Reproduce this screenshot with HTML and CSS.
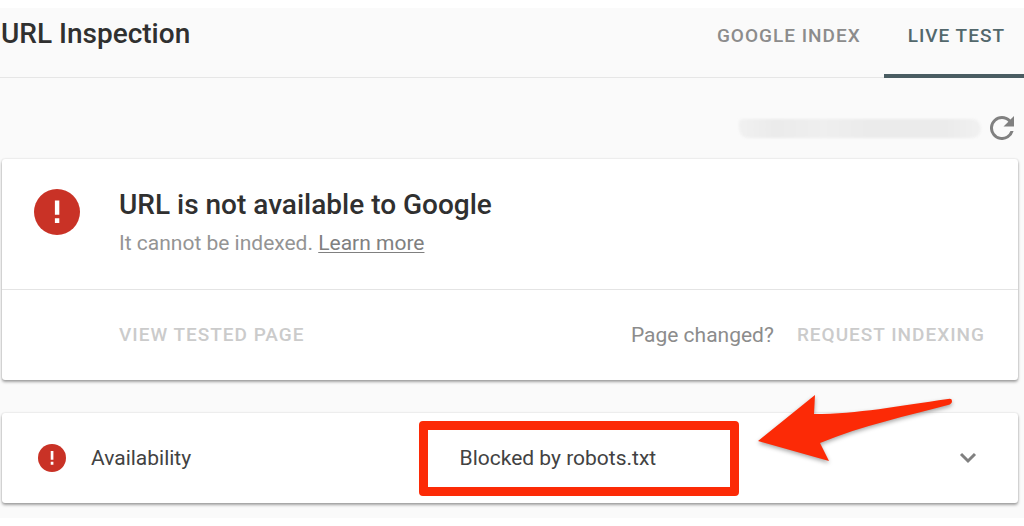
FILE: index.html
```
<!DOCTYPE html>
<html lang="en">
<head>
    <meta charset="UTF-8">
    <meta name="viewport" content="width=device-width, initial-scale=1.0">
    <title>URL Inspection</title>
    <link rel="stylesheet" href="styles.css">
</head>
<body>

    <main class="page">
        <header class="header">
            <h1>URL Inspection</h1>
            <nav class="tabs">
                <button class="tab" type="button">GOOGLE INDEX</button>
                <button class="tab active" type="button">LIVE TEST</button>
            </nav>
        </header>

        <div class="toolbar">
            <span class="redacted"></span>
            <button class="icon-button" type="button" aria-label="Refresh">
                <svg class="refresh" viewBox="4 4 16 16">
                    <path d="M17.65 6.35A7.96 7.96 0 0 0 12 4a8 8 0 1 0 7.73 10h-2.08A6 6 0 1 1 12 6c1.66 0 3.14.69 4.22 1.78L13 11h7V4z"/>
                </svg>
            </button>
        </div>

        <!-- Verdict -->
        <section class="card">
            <div class="verdict">
                <svg class="error-icon large" viewBox="0 0 24 24">
                    <circle cx="12" cy="12" r="12"/>
                    <path d="M10.9 6h2.3v7.4h-2.3zM10.9 15.2h2.3v2.5h-2.3z"/>
                </svg>
                <div>
                    <h2>URL is not available to Google</h2>
                    <p>It cannot be indexed. <a href="#">Learn more</a></p>
                </div>
            </div>
            <div class="actions">
                <button class="text-button" type="button" disabled>VIEW TESTED PAGE</button>
                <span class="hint">Page changed?</span>
                <button class="text-button" type="button" disabled>REQUEST INDEXING</button>
            </div>
        </section>

        <!-- Availability -->
        <section class="card row">
            <div class="row-name">
                <svg class="error-icon" viewBox="0 0 24 24">
                    <circle cx="12" cy="12" r="12"/>
                    <path d="M10.9 6h2.3v7.4h-2.3zM10.9 15.2h2.3v2.5h-2.3z"/>
                </svg>
                <span>Availability</span>
            </div>
            <div class="highlight">
                <span>Blocked by robots.txt</span>
                <svg class="arrow" viewBox="0 0 194 70">
                    <path d="M0 47 57 1 56 20C100 20 140 12 190 5Q194 4 194 7Q194 10 190 11C150 22 105 31 62 49L71 67Z"/>
                </svg>
            </div>
            <button class="icon-button" type="button" aria-label="Expand">
                <svg class="chevron" viewBox="0 0 18 12">
                    <path d="M2 2l7 7 7-7"/>
                </svg>
            </button>
        </section>
    </main>

</body>
</html>
```

FILE: styles.css
```
body {
    margin: 0;
    padding: 8px 0;
    font-family: Roboto, Arial, sans-serif;
    font-size: 21px;
    line-height: 24px;
    color: #424242;
    background-color: #fff;
}

h1,
h2,
p {
    margin: 0;
}

h1,
h2 {
    font-size: 28px;
    line-height: 32px;
    font-weight: 500;
    color: #303030;
}

button {
    padding: 0;
    font: inherit;
    color: inherit;
    background: none;
    border: none;
    cursor: pointer;
}

.page {
    padding-bottom: 15px;
    background-color: #fafafa;
}

/* Header with tabs */
.header {
    display: flex;
    justify-content: space-between;
    height: 69px;
    padding-left: 1px;
    border-bottom: 1px solid #e6e6e6;
}

.header h1 {
    padding-top: 10px;
}

.tabs {
    display: flex;
    gap: 4px;
}

.tab {
    height: 70px;
    padding: 0 19px 10px 24px;
    font-size: 19px;
    font-weight: 500;
    letter-spacing: 1px;
    color: #8c8c8c;
    border-bottom: 4px solid transparent;
}

.tab.active {
    color: #53686c;
    border-bottom-color: #4a5d62;
}

.toolbar {
    display: flex;
    justify-content: flex-end;
    align-items: center;
    gap: 9px;
    padding: 38px 10px 19px;
}

.redacted {
    width: 242px;
    height: 19px;
    border-radius: 4px 9px 9px 9px;
    background: linear-gradient(90deg, #f1f1f1, #ebebeb 15%, #efefef 35%, #ebebeb 55%, #ebebeb 85%, #f1f1f1);
    filter: blur(1px);
}

.icon-button {
    display: flex;
}

.refresh {
    width: 24px;
    height: 24px;
    fill: #808080;
}

/* Cards */
.card {
    margin: 0 6px 0 2px;
    background-color: #fff;
    border-radius: 3px;
    box-shadow: 0 2px 3px rgba(0, 0, 0, 0.35), 0 0 2px rgba(0, 0, 0, 0.15);
}

.card + .card {
    margin-top: 33px;
}

.error-icon {
    flex: none;
    width: 28px;
    height: 28px;
    fill: #c93226;
}

.error-icon path {
    fill: #fff;
}

.error-icon.large {
    width: 46px;
    height: 46px;
}

.verdict {
    display: flex;
    gap: 39px;
    padding: 30px 32px 34px;
    border-bottom: 1px solid #e4e4e4;
}

.verdict h2 {
    margin-bottom: 10px;
}

.verdict p {
    color: #949494;
}

.verdict a {
    color: #808080;
    text-decoration-thickness: 1px;
    text-underline-offset: 2px;
}

.actions {
    display: flex;
    align-items: center;
    gap: 23px;
    height: 90px;
    padding: 0 33px 0 117px;
}

.text-button {
    font-size: 19px;
    font-weight: 500;
    letter-spacing: 1px;
    color: #cbcbcb;
}

.hint {
    margin-left: auto;
    color: #8c8c8c;
}

.row {
    display: grid;
    grid-template-columns: 41% 320px 1fr;
    align-items: center;
    height: 90px;
}

.row-name {
    display: flex;
    align-items: center;
    gap: 25px;
    padding-left: 36px;
}

.row .icon-button {
    justify-self: end;
    margin-right: 41px;
}

.chevron {
    width: 18px;
    height: 12px;
    fill: none;
    stroke: #808080;
    stroke-width: 3;
}

/* Red frame and arrow around the reason */
.highlight {
    position: relative;
    padding: 16px 0 17px 32px;
    border: 9px solid #fc2a06;
    border-radius: 4px;
}

.highlight span {
    display: block;
}

.arrow {
    position: absolute;
    left: calc(100% + 28px);
    top: -36px;
    width: 194px;
    height: 70px;
    fill: #fc2a06;
    filter: drop-shadow(0 2px 2px rgba(0, 0, 0, 0.35));
}
```
